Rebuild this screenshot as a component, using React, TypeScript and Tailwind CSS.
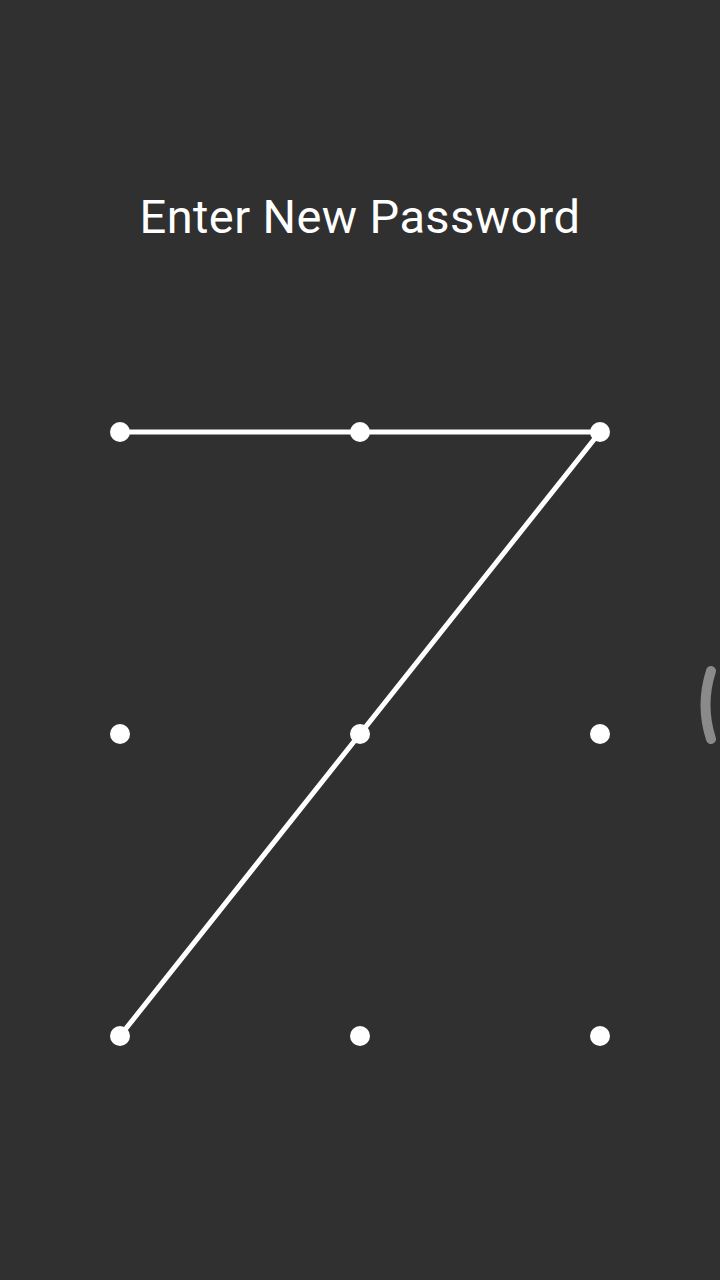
const cols = [120, 360, 600];
const rows = [151, 453, 755];

export default function App() {
  return (
    <div className="relative h-screen w-full overflow-hidden bg-[#303030] font-['Roboto',sans-serif] text-white">
      <h1 className="pt-[189px] text-center text-[47px] leading-[56px] tracking-[0.4px]">
        Enter New Password
      </h1>

      {/* pattern grid */}
      <div className="relative mt-[36px] grid h-[906px] grid-cols-3 grid-rows-3">
        {Array.from({ length: 9 }).map((_, i) => (
          <div key={i} className="flex items-center justify-center">
            <span className="h-[20px] w-[20px] rounded-full bg-white" />
          </div>
        ))}
        <svg
          className="pointer-events-none absolute inset-0"
          width="720"
          height="906"
          viewBox="0 0 720 906"
        >
          <polyline
            points={`${cols[0]},${rows[0]} ${cols[2]},${rows[0]} ${cols[0]},${rows[2]}`}
            fill="none"
            stroke="#ffffff"
            strokeWidth="5"
            strokeLinejoin="round"
          />
        </svg>
      </div>

      {/* edge handle */}
      <svg
        className="absolute right-0 top-[662px]"
        width="24"
        height="86"
        viewBox="0 0 24 86"
      >
        <path
          d="M15 9 Q 4 43 15 77"
          fill="none"
          stroke="#8a8a8a"
          strokeWidth="10"
          strokeLinecap="round"
        />
      </svg>
    </div>
  );
}
